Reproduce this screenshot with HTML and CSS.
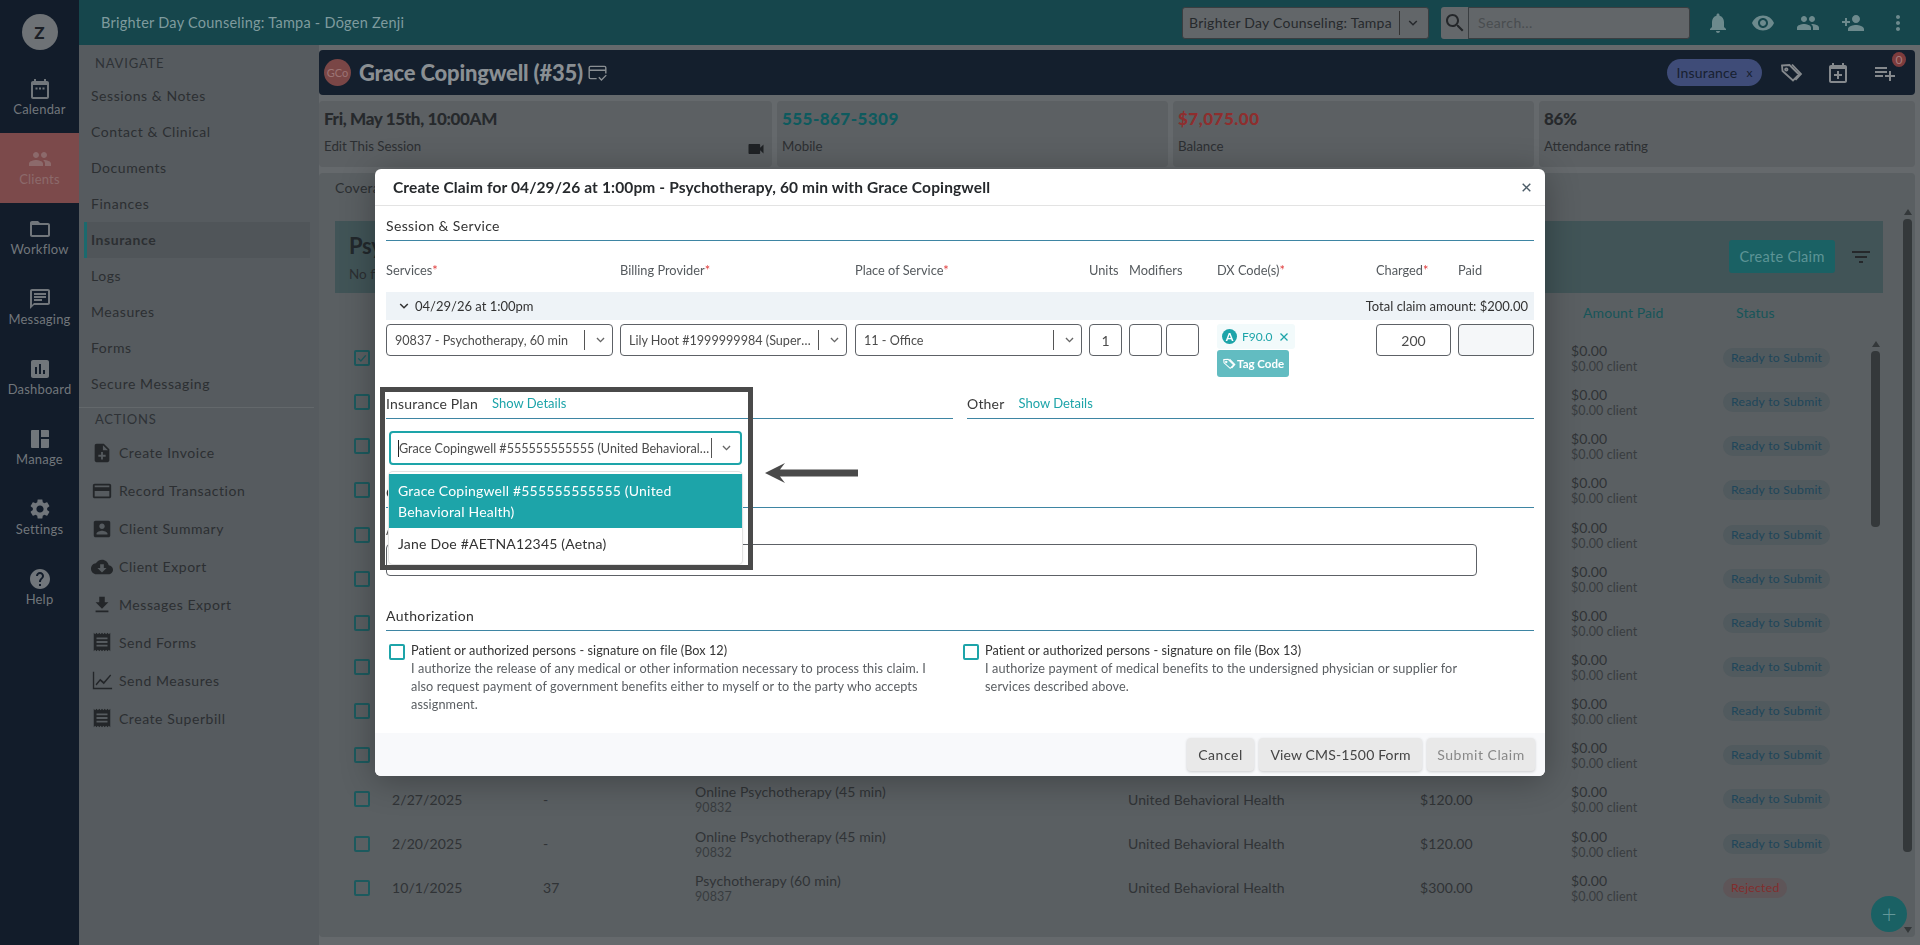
FILE: index.html
```html
<!DOCTYPE html>
<html lang="en">
<head>
<meta charset="utf-8">
<title>Create Claim</title>
<link rel="stylesheet" href="styles.css">
</head>
<body>
<svg class="sprite" aria-hidden="true">
  <symbol id="i-cal" viewBox="0 0 24 24"><path d="M19 4h-1V2h-2v2H8V2H6v2H5c-1.1 0-2 .9-2 2v14c0 1.1.9 2 2 2h14c1.1 0 2-.9 2-2V6c0-1.1-.9-2-2-2zm0 16H5V8h14v12zM7.500 10.500h2v2h-2zM11 10.500h2v2h-2zM14.500 10.500h2v2h-2z"/></symbol>
  <symbol id="i-people" viewBox="0 0 24 24"><path d="M16 11c1.660 0 2.990-1.340 2.990-3S17.660 5 16 5c-1.660 0-3 1.340-3 3s1.340 3 3 3zm-8 0c1.660 0 2.990-1.340 2.990-3S9.660 5 8 5C6.340 5 5 6.340 5 8s1.340 3 3 3zm0 2c-2.330 0-7 1.170-7 3.500V19h14v-2.500c0-2.330-4.670-3.500-7-3.500zm8 0c-.29 0-.62.02-.97.05 1.160.84 1.970 1.970 1.970 3.450V19h6v-2.500c0-2.330-4.670-3.500-7-3.500z"/></symbol>
  <symbol id="i-folder" viewBox="0 0 24 24"><path d="M20 6h-8l-2-2H4c-1.100 0-1.990.9-1.990 2L2 18c0 1.100.9 2 2 2h16c1.100 0 2-.9 2-2V8c0-1.100-.9-2-2-2zm0 12H4V8h16v10z"/></symbol>
  <symbol id="i-msg" viewBox="0 0 24 24"><path d="M20 2H4c-1.100 0-2 .9-2 2v18l4-4h14c1.100 0 2-.9 2-2V4c0-1.100-.9-2-2-2zm0 14H6l-2 2V4h16v12zM6 12h8v2H6zM6 9h12v2H6zM6 6h12v2H6z"/></symbol>
  <symbol id="i-chart" viewBox="0 0 24 24"><path d="M19 3H5c-1.100 0-2 .9-2 2v14c0 1.100.9 2 2 2h14c1.100 0 2-.9 2-2V5c0-1.100-.9-2-2-2zM9 17H7v-7h2v7zm4 0h-2V7h2v10zm4 0h-2v-4h2v4z"/></symbol>
  <symbol id="i-dash" viewBox="0 0 24 24"><path d="M4 3h7v18H4a1 1 0 0 1-1-1V4a1 1 0 0 1 1-1zM13 3h7a1 1 0 0 1 1 1v6h-8zM13 12h8v8a1 1 0 0 1-1 1h-7z"/></symbol>
  <symbol id="i-gear" viewBox="0 0 24 24"><path d="M19.140 12.940c.04-.3.06-.61.06-.94 0-.32-.02-.64-.07-.94l2.030-1.580c.18-.14.23-.41.12-.61l-1.920-3.320c-.12-.22-.37-.29-.59-.22l-2.390.96c-.5-.38-1.030-.7-1.620-.94l-.36-2.540c-.04-.24-.24-.41-.48-.41h-3.840c-.24 0-.43.17-.47.41l-.36 2.540c-.59.24-1.130.57-1.620.94l-2.390-.96c-.22-.08-.47 0-.59.22L2.740 8.870c-.12.21-.08.47.12.61l2.030 1.580c-.05.3-.09.63-.09.94s.02.64.07.94l-2.030 1.580c-.18.14-.23.41-.12.61l1.920 3.320c.12.22.37.29.59.22l2.390-.96c.5.38 1.030.7 1.620.94l.36 2.540c.05.24.24.41.48.41h3.840c.24 0 .44-.17.47-.41l.36-2.540c.59-.24 1.130-.56 1.620-.94l2.390.96c.22.08.47 0 .59-.22l1.920-3.320c.12-.22.07-.47-.12-.61l-2.010-1.580zM12 15.600c-1.980 0-3.600-1.620-3.600-3.600s1.620-3.600 3.600-3.600 3.600 1.620 3.600 3.600-1.620 3.600-3.600 3.600z"/></symbol>
  <symbol id="i-help" viewBox="0 0 24 24"><path d="M12 2C6.480 2 2 6.480 2 12s4.480 10 10 10 10-4.480 10-10S17.520 2 12 2zm1 17h-2v-2h2v2zm2.070-7.750l-.9.92C13.450 12.900 13 13.500 13 15h-2v-.5c0-1.100.45-2.100 1.170-2.830l1.240-1.260c.37-.36.59-.86.59-1.410 0-1.100-.9-2-2-2s-2 .9-2 2H8c0-2.210 1.790-4 4-4s4 1.790 4 4c0 .88-.36 1.680-.93 2.250z"/></symbol>
  <symbol id="i-note" viewBox="0 0 24 24"><path d="M14 2H6c-1.100 0-1.990.9-1.990 2L4 20c0 1.100.89 2 1.990 2H18c1.100 0 2-.9 2-2V8l-6-6zm2 14h-3v3h-2v-3H8v-2h3v-3h2v3h3v2zm-3-7V3.500L18.500 9H13z"/></symbol>
  <symbol id="i-card" viewBox="0 0 24 24"><path d="M20 4H4c-1.110 0-1.990.89-1.990 2L2 18c0 1.110.89 2 2 2h16c1.110 0 2-.89 2-2V6c0-1.110-.89-2-2-2zm0 14H4v-6h16v6zm0-10H4V6h16v2z"/></symbol>
  <symbol id="i-acct" viewBox="0 0 24 24"><path d="M3 5v14c0 1.100.89 2 2 2h14c1.100 0 2-.9 2-2V5c0-1.100-.9-2-2-2H5c-1.110 0-2 .9-2 2zm12 4c0 1.660-1.340 3-3 3s-3-1.340-3-3 1.340-3 3-3 3 1.340 3 3zm-9 8c0-2 4-3.100 6-3.100s6 1.100 6 3.100v1H6v-1z"/></symbol>
  <symbol id="i-cloud" viewBox="0 0 24 24"><path d="M19.350 10.040C18.670 6.590 15.640 4 12 4 9.110 4 6.600 5.640 5.350 8.040 2.340 8.360 0 10.910 0 14c0 3.310 2.690 6 6 6h13c2.760 0 5-2.240 5-5 0-2.640-2.050-4.780-4.650-4.960zM17 13l-5 5-5-5h3V9h4v4h3z"/></symbol>
  <symbol id="i-down" viewBox="0 0 24 24"><path d="M19 9h-4V3H9v6H5l7 7 7-7zM5 18v2h14v-2H5z"/></symbol>
  <symbol id="i-receipt" viewBox="0 0 24 24"><path d="M3 22l1.500-1.500L6 22l1.500-1.500L9 22l1.500-1.500L12 22l1.500-1.500L15 22l1.500-1.500L18 22l1.500-1.500L21 22V2l-1.500 1.500L18 2l-1.500 1.500L15 2l-1.500 1.500L12 2l-1.500 1.500L9 2 7.500 3.500 6 2 4.500 3.500 3 2v20zM18 17H6v-2h12v2zm0-4H6v-2h12v2zm0-4H6V7h12v2z"/></symbol>
  <symbol id="i-line" viewBox="0 0 24 24"><path d="M2 3h1.500v17.500H23V22H2zM5 16.500l5-6 4 3.500 7-8 1 1-8 9.500-4-3.500-4 5z"/></symbol>
  <symbol id="i-bell" viewBox="0 0 24 24"><path d="M12 22c1.100 0 2-.9 2-2h-4c0 1.100.89 2 2 2zm6-6v-5c0-3.070-1.640-5.640-4.500-6.320V4c0-.83-.67-1.500-1.500-1.500s-1.500.67-1.500 1.500v.68C7.630 5.360 6 7.920 6 11v5l-2 2v1h16v-1l-2-2z"/></symbol>
  <symbol id="i-eye" viewBox="0 0 24 24"><path d="M12 4.500C7 4.500 2.730 7.610 1 12c1.730 4.390 6 7.500 11 7.500s9.270-3.110 11-7.500c-1.730-4.390-6-7.500-11-7.500zM12 17c-2.760 0-5-2.240-5-5s2.240-5 5-5 5 2.240 5 5-2.240 5-5 5zm0-8c-1.660 0-3 1.340-3 3s1.340 3 3 3 3-1.340 3-3-1.340-3-3-3z"/></symbol>
  <symbol id="i-padd" viewBox="0 0 24 24"><path d="M15 12c2.210 0 4-1.790 4-4s-1.790-4-4-4-4 1.790-4 4 1.790 4 4 4zm-9-2V7H4v3H1v2h3v3h2v-3h3v-2H6zm9 4c-2.670 0-8 1.340-8 4v2h16v-2c0-2.660-5.330-4-8-4z"/></symbol>
  <symbol id="i-more" viewBox="0 0 24 24"><path d="M12 8c1.100 0 2-.9 2-2s-.9-2-2-2-2 .9-2 2 .9 2 2 2zm0 2c-1.100 0-2 .9-2 2s.9 2 2 2 2-.9 2-2-.9-2-2-2zm0 6c-1.100 0-2 .9-2 2s.9 2 2 2 2-.9 2-2-.9-2-2-2z"/></symbol>
  <symbol id="i-search" viewBox="0 0 24 24"><path d="M15.500 14h-.79l-.28-.27C15.410 12.590 16 11.110 16 9.500 16 5.910 13.090 3 9.500 3S3 5.910 3 9.500 5.910 16 9.500 16c1.610 0 3.090-.59 4.230-1.570l.27.28v.79l5 4.990L20.490 19l-4.990-5zm-6 0C7.010 14 5 11.990 5 9.500S7.010 5 9.500 5 14 7.010 14 9.500 11.990 14 9.500 14z"/></symbol>
  <symbol id="i-tag" viewBox="0 0 24 24"><path d="M3 4.500 10.500 4 20 13.500l-6 6L3.500 10zM7.300 7.300a1.200 1.200 0 1 0 .01 0zM13 3.500l9 9.500-5.500 6" fill="none" stroke="currentColor" stroke-width="1.800"/></symbol>
  <symbol id="i-calplus" viewBox="0 0 24 24"><path d="M19 4h-1V2h-2v2H8V2H6v2H5c-1.100 0-2 .9-2 2v14c0 1.100.9 2 2 2h14c1.100 0 2-.9 2-2V6c0-1.100-.9-2-2-2zm0 16H5V8h14v12zm-8-10h2v3h3v2h-3v3h-2v-3H8v-2h3z"/></symbol>
  <symbol id="i-plist" viewBox="0 0 24 24"><path d="M14 10H2v2h12v-2zm0-4H2v2h12V6zm4 8v-4h-2v4h-4v2h4v4h2v-4h4v-2h-4zM2 16h8v-2H2v2z"/></symbol>
  <symbol id="i-video" viewBox="0 0 24 24"><path d="M17 10.500V7c0-.55-.45-1-1-1H4c-.55 0-1 .45-1 1v10c0 .55.45 1 1 1h12c.55 0 1-.45 1-1v-3.500l4 4v-11l-4 4z"/></symbol>
  <symbol id="i-filter" viewBox="0 0 24 24"><path d="M10 18h4v-2h-4v2zM3 6v2h18V6H3zm3 7h12v-2H6v2z"/></symbol>
  <symbol id="i-chev" viewBox="0 0 24 24"><path d="M5.500 8.500 12 15l6.500-6.500" fill="none" stroke="currentColor" stroke-width="2.600"/></symbol>
  <symbol id="i-x" viewBox="0 0 24 24"><path d="M5 5l14 14M19 5 5 19" fill="none" stroke="currentColor" stroke-width="2.600"/></symbol>
  <symbol id="i-cardcheck" viewBox="0 0 24 24"><path d="M11 19H4a1.500 1.500 0 0 1-1.500-1.500v-11A1.500 1.500 0 0 1 4 5h16a1.500 1.500 0 0 1 1.500 1.500V13M2.500 9.500h19M13.500 17.500l3 3 5.500-5.500" fill="none" stroke="currentColor" stroke-width="1.600"/></symbol>
</svg>

<div class="app">
  <nav class="rail">
    <div class="rail-top"><span class="rail-avatar">Z</span></div>
    <a class="rail-item"><svg class="ic24"><use href="#i-cal"/></svg>Calendar</a>
    <a class="rail-item is-current"><svg class="ic24"><use href="#i-people"/></svg>Clients</a>
    <a class="rail-item"><svg class="ic24"><use href="#i-folder"/></svg>Workflow</a>
    <a class="rail-item"><svg class="ic24"><use href="#i-msg"/></svg>Messaging</a>
    <a class="rail-item"><svg class="ic24"><use href="#i-chart"/></svg>Dashboard</a>
    <a class="rail-item"><svg class="ic24"><use href="#i-dash"/></svg>Manage</a>
    <a class="rail-item"><svg class="ic24"><use href="#i-gear"/></svg>Settings</a>
    <a class="rail-item"><svg class="ic24"><use href="#i-help"/></svg>Help</a>
  </nav>

  <div class="shell">
    <header class="topbar">
      <div class="brand">Brighter Day Counseling: Tampa - Dōgen Zenji</div>
      <div class="top-select"><span>Brighter Day Counseling: Tampa</span><i class="sep"></i><svg class="ic14"><use href="#i-chev"/></svg></div>
      <div class="top-search">
        <span class="search-btn"><svg class="ic24"><use href="#i-search"/></svg></span>
        <span class="search-input">Search...</span>
      </div>
      <div class="top-icons">
        <svg class="ic24"><use href="#i-bell"/></svg>
        <svg class="ic24"><use href="#i-eye"/></svg>
        <svg class="ic24"><use href="#i-people"/></svg>
        <svg class="ic24"><use href="#i-padd"/></svg>
        <svg class="ic24"><use href="#i-more"/></svg>
      </div>
    </header>

    <div class="under">
      <aside class="sidenav">
        <div class="nav-heading nav-heading-first">NAVIGATE</div>
        <a class="nav-item">Sessions &amp; Notes</a>
        <a class="nav-item">Contact &amp; Clinical</a>
        <a class="nav-item">Documents</a>
        <a class="nav-item">Finances</a>
        <a class="nav-item is-active">Insurance</a>
        <a class="nav-item">Logs</a>
        <a class="nav-item">Measures</a>
        <a class="nav-item">Forms</a>
        <a class="nav-item">Secure Messaging</a>
        <div class="nav-divider"></div>
        <div class="nav-heading">ACTIONS</div>
        <a class="act-item"><svg class="ic24"><use href="#i-note"/></svg>Create Invoice</a>
        <a class="act-item"><svg class="ic24"><use href="#i-card"/></svg>Record Transaction</a>
        <a class="act-item"><svg class="ic24"><use href="#i-acct"/></svg>Client Summary</a>
        <a class="act-item"><svg class="ic24"><use href="#i-cloud"/></svg>Client Export</a>
        <a class="act-item"><svg class="ic24"><use href="#i-down"/></svg>Messages Export</a>
        <a class="act-item"><svg class="ic24"><use href="#i-receipt"/></svg>Send Forms</a>
        <a class="act-item"><svg class="ic24"><use href="#i-line"/></svg>Send Measures</a>
        <a class="act-item"><svg class="ic24"><use href="#i-receipt"/></svg>Create Superbill</a>
      </aside>

      <main class="content">
        <section class="client-bar">
          <span class="client-avatar">GCo</span>
          <h1 class="client-name">Grace Copingwell (#35)</h1>
          <svg class="client-card"><use href="#i-cardcheck"/></svg>
          <span class="client-spacer"></span>
          <span class="client-pill">Insurance<span class="pill-x">x</span></span>
          <svg class="ic24 bar-icon"><use href="#i-tag"/></svg>
          <svg class="ic24 bar-icon"><use href="#i-calplus"/></svg>
          <span class="bar-badged">
            <svg class="ic24 bar-icon"><use href="#i-plist"/></svg>
            <span class="bar-badge">0</span>
          </span>
        </section>

        <section class="stats">
          <div class="stat stat-a">
            <div class="stat-big">Fri, May 15th, 10:00AM</div>
            <div class="stat-small">Edit This Session</div>
            <svg class="ic20 stat-video"><use href="#i-video"/></svg>
          </div>
          <div class="stat stat-b">
            <div class="stat-big tone-teal">555-867-5309</div>
            <div class="stat-small">Mobile</div>
          </div>
          <div class="stat stat-c">
            <div class="stat-big tone-red">$7,075.00</div>
            <div class="stat-small">Balance</div>
          </div>
          <div class="stat stat-d">
            <div class="stat-big">86%</div>
            <div class="stat-small">Attendance rating</div>
          </div>
        </section>

        <section class="panel">
          <div class="tabs"><span>Coverage</span></div>
          <div class="banner">
            <div>
              <div class="banner-title">Psychotherapy Claims</div>
              <div class="banner-sub">No filters applied</div>
            </div>
            <div class="banner-actions">
              <span class="claim-btn">Create Claim</span>
              <svg class="ic24"><use href="#i-filter"/></svg>
            </div>
          </div>

          <div class="tbl">
            <div class="tbl-row tbl-head"><span></span><span>Date</span><span>Claim</span><span>Service</span><span>Insurance</span><span>Amount</span><span class="hd-paid">Amount Paid</span><span class="hd-status">Status</span></div>
            <div class="tbl-row"><span class="cb is-checked"><svg viewBox="0 0 16 16"><path d="M3 8.500 6.500 12 13 4.500" fill="none" stroke="currentColor" stroke-width="1.800"/></svg></span><span>4/29/2026</span><span>-</span><span>Psychotherapy (60 min)<small>90837</small></span><span>United Behavioral Health</span><span>$200.00</span><span>$0.00<small>$0.00 client</small></span><span><em class="status">Ready to Submit</em></span></div>
            <div class="tbl-row"><span class="cb"></span><span>4/22/2026</span><span>-</span><span>Psychotherapy (60 min)<small>90837</small></span><span>United Behavioral Health</span><span>$200.00</span><span>$0.00<small>$0.00 client</small></span><span><em class="status">Ready to Submit</em></span></div>
            <div class="tbl-row"><span class="cb"></span><span>4/15/2026</span><span>-</span><span>Psychotherapy (60 min)<small>90837</small></span><span>United Behavioral Health</span><span>$200.00</span><span>$0.00<small>$0.00 client</small></span><span><em class="status">Ready to Submit</em></span></div>
            <div class="tbl-row"><span class="cb"></span><span>4/8/2026</span><span>-</span><span>Psychotherapy (60 min)<small>90837</small></span><span>United Behavioral Health</span><span>$200.00</span><span>$0.00<small>$0.00 client</small></span><span><em class="status">Ready to Submit</em></span></div>
            <div class="tbl-row"><span class="cb"></span><span>4/1/2026</span><span>-</span><span>Psychotherapy (60 min)<small>90837</small></span><span>United Behavioral Health</span><span>$200.00</span><span>$0.00<small>$0.00 client</small></span><span><em class="status">Ready to Submit</em></span></div>
            <div class="tbl-row"><span class="cb"></span><span>3/25/2026</span><span>-</span><span>Psychotherapy (60 min)<small>90837</small></span><span>United Behavioral Health</span><span>$200.00</span><span>$0.00<small>$0.00 client</small></span><span><em class="status">Ready to Submit</em></span></div>
            <div class="tbl-row"><span class="cb"></span><span>3/18/2026</span><span>-</span><span>Psychotherapy (60 min)<small>90837</small></span><span>United Behavioral Health</span><span>$200.00</span><span>$0.00<small>$0.00 client</small></span><span><em class="status">Ready to Submit</em></span></div>
            <div class="tbl-row"><span class="cb"></span><span>3/11/2026</span><span>-</span><span>Psychotherapy (60 min)<small>90837</small></span><span>United Behavioral Health</span><span>$200.00</span><span>$0.00<small>$0.00 client</small></span><span><em class="status">Ready to Submit</em></span></div>
            <div class="tbl-row"><span class="cb"></span><span>3/6/2025</span><span>-</span><span>Online Psychotherapy (45 min)<small>90832</small></span><span>United Behavioral Health</span><span>$120.00</span><span>$0.00<small>$0.00 client</small></span><span><em class="status">Ready to Submit</em></span></div>
            <div class="tbl-row"><span class="cb"></span><span>3/3/2025</span><span>-</span><span>Online Psychotherapy (45 min)<small>90832</small></span><span>United Behavioral Health</span><span>$120.00</span><span>$0.00<small>$0.00 client</small></span><span><em class="status">Ready to Submit</em></span></div>
            <div class="tbl-row"><span class="cb"></span><span>2/27/2025</span><span>-</span><span>Online Psychotherapy (45 min)<small>90832</small></span><span>United Behavioral Health</span><span>$120.00</span><span>$0.00<small>$0.00 client</small></span><span><em class="status">Ready to Submit</em></span></div>
            <div class="tbl-row"><span class="cb"></span><span>2/20/2025</span><span>-</span><span>Online Psychotherapy (45 min)<small>90832</small></span><span>United Behavioral Health</span><span>$120.00</span><span>$0.00<small>$0.00 client</small></span><span><em class="status">Ready to Submit</em></span></div>
            <div class="tbl-row"><span class="cb"></span><span>10/1/2025</span><span>37</span><span>Psychotherapy (60 min)<small>90837</small></span><span>United Behavioral Health</span><span>$300.00</span><span>$0.00<small>$0.00 client</small></span><span><em class="status status-bad">Rejected</em></span></div>
          </div>

          <div class="sb sb-inner"><i class="sb-up"></i><i class="sb-thumb"></i></div>
          <div class="sb sb-outer"><i class="sb-up"></i><i class="sb-thumb"></i><i class="sb-down"></i></div>
          <span class="fab">+</span>
        </section>
      </main>
    </div>
  </div>
</div>

<div class="modal" role="dialog">
  <header class="modal-head">
    <h2>Create Claim for 04/29/26 at 1:00pm - Psychotherapy, 60 min with Grace Copingwell</h2>
    <svg class="modal-x"><use href="#i-x"/></svg>
  </header>

  <div class="modal-body">
    <div class="sec-head">Session &amp; Service</div>

    <div class="svc-grid svc-labels">
      <span>Services<b>*</b></span>
      <span>Billing Provider<b>*</b></span>
      <span>Place of Service<b>*</b></span>
      <span>Units</span>
      <span class="span2">Modifiers</span>
      <span>DX Code(s)<b>*</b></span>
      <span>Charged<b>*</b></span>
      <span>Paid</span>
    </div>

    <div class="date-bar">
      <span class="date-left"><svg class="ic14"><use href="#i-chev"/></svg>04/29/26 at 1:00pm</span>
      <span>Total claim amount: $200.00</span>
    </div>

    <div class="svc-grid svc-row">
      <div class="sel sel-svc"><span class="sel-val">90837 - Psychotherapy, 60 min</span><i class="sep"></i><svg class="ic14"><use href="#i-chev"/></svg></div>
      <div class="sel sel-svc"><span class="sel-val">Lily Hoot #1999999984 (Supervising)</span><i class="sep"></i><svg class="ic14"><use href="#i-chev"/></svg></div>
      <div class="sel sel-svc"><span class="sel-val">11 - Office</span><i class="sep"></i><svg class="ic14"><use href="#i-chev"/></svg></div>
      <div class="box box-units">1</div>
      <div class="box box-mod"></div>
      <div class="box box-mod"></div>
      <div class="dx">
        <span class="dx-chip"><i class="dx-a">A</i>F90.0<svg class="dx-x"><use href="#i-x"/></svg></span>
        <span class="dx-tag"><svg class="ic14"><use href="#i-tag"/></svg>Tag Code</span>
      </div>
      <div class="box box-money">200</div>
      <div class="box box-money is-off"></div>
    </div>

    <div class="two-col">
      <div>
        <div class="sec-head sec-flush">Insurance Plan<a class="show">Show Details</a></div>
        <div class="plan-wrap">
          <div class="sel plan-sel"><i class="caret"></i><span class="sel-val">Grace Copingwell #555555555555 (United Behavioral Health)</span><i class="sep"></i><svg class="ic14"><use href="#i-chev"/></svg></div>
          <ul class="menu">
            <li class="menu-on">Grace Copingwell #555555555555 (United Behavioral Health)</li>
            <li>Jane Doe #AETNA12345 (Aetna)</li>
          </ul>
        </div>
      </div>
      <div>
        <div class="sec-head sec-flush">Other<a class="show">Show Details</a></div>
      </div>
    </div>

    <div class="sec-head sec-comment">Comments</div>
    <div class="field-label">Additional claim information</div>
    <div class="note-input">Add a comment to this claim</div>

    <div class="sec-head sec-auth">Authorization</div>
    <div class="auth">
      <div class="auth-item">
        <span class="cb cb-bright"></span>
        <p><strong>Patient or authorized persons - signature on file (Box 12)</strong>I authorize the release of any medical or other information necessary to process this claim. I also request payment of government benefits either to myself or to the party who accepts assignment.</p>
      </div>
      <div class="auth-item">
        <span class="cb cb-bright"></span>
        <p><strong>Patient or authorized persons - signature on file (Box 13)</strong>I authorize payment of medical benefits to the undersigned physician or supplier for services described above.</p>
      </div>
    </div>
  </div>

  <footer class="modal-foot">
    <button class="btn btn-cancel">Cancel</button>
    <button class="btn btn-view">View CMS-1500 Form</button>
    <button class="btn btn-off">Submit Claim</button>
  </footer>

  <div class="note-frame"></div>
  <svg class="note-arrow" viewBox="0 0 93 20"><path d="M0 10 20 0l-5 6.500h78v7H15l5 6.500z"/></svg>
</div>
</body>
</html>
```

FILE: styles.css
```css
* { box-sizing: border-box; }
html, body { margin: 0; height: 945px; overflow: hidden; }
body { font-family: Lato, "Open Sans", sans-serif; font-size: 14px; color: #2c2f32; background: #65696c; }
h1, h2, p, ul { margin: 0; padding: 0; }
.sprite { display: none; }
svg { fill: currentColor; flex: none; }
.ic24 { width: 24px; height: 24px; }
.ic20 { width: 20px; height: 20px; }
.ic14 { width: 14px; height: 14px; }

.app { display: flex; height: 945px; }

/* left rail */
.rail { width: 79px; flex: none; background: #121c2a; color: #71767b; display: flex; flex-direction: column; }
.rail-top { height: 63px; display: flex; align-items: flex-start; justify-content: center; padding-top: 14px; }
.rail-avatar { width: 36px; height: 36px; border-radius: 50%; background: #6e7276; color: #1c2026; font-weight: 900; font-size: 17px; display: flex; align-items: center; justify-content: center; }
.rail-item { height: 70px; display: flex; flex-direction: column; align-items: center; justify-content: center; gap: 0; font-size: 13px; line-height: 16px; letter-spacing: .2px; padding-bottom: 3px; }
.rail-item.is-current { background: #7c4a4b; color: #8c6a6b; }

/* shell */
.shell { flex: 1; min-width: 0; display: flex; flex-direction: column; }
.topbar { height: 45px; flex: none; background: #16464c; display: flex; align-items: center; padding-left: 22px; }
.brand { flex: 1; color: #7f9b9e; font-size: 14.5px; letter-spacing: .25px; }
.top-select { width: 247px; height: 32px; border: 1px solid #3a3e41; border-radius: 3px; background: #626669; color: #26292c; display: flex; align-items: center; padding: 0 8px 0 6px; font-size: 14px; letter-spacing: .25px; margin-right: 12px; }
.top-select span { flex: 1; white-space: nowrap; }
.top-select .sep { height: 24px; margin-right: 6px; background: #333; }
.sep { width: 1px; flex: none; background: #555; }
.top-search { display: flex; height: 32px; margin-right: 16px; }
.search-btn { width: 27px; background: #64686b; border-radius: 3px 0 0 3px; display: flex; align-items: center; justify-content: center; color: #24272a; }
.search-input { width: 222px; background: #626669; border: 1px solid #3a3e41; border-radius: 0 3px 3px 0; color: #494d50; padding: 6px 9px; letter-spacing: .4px; }
.top-icons { display: flex; gap: 21px; color: #6d8a8d; padding-right: 10px; }

.under { flex: 1; display: flex; min-height: 0; }

/* second nav */
.sidenav { width: 240px; flex: none; background: #565b5f; display: flex; flex-direction: column; }
.nav-heading { padding-left: 16px; height: 26px; line-height: 22px; font-size: 13px; letter-spacing: .8px; color: #2e3236; }
.nav-heading-first { height: 33px; line-height: 36px; }
.nav-item { height: 36px; line-height: 36px; margin: 0 9px 0 5px; border-left: 3px solid transparent; padding-left: 4px; letter-spacing: .55px; color: #2c2f32; }
.nav-item.is-active { background: #505559; border-left-color: #1b6a6e; font-weight: 700; }
.nav-divider { height: 1px; background: #63686b; margin: 5px 5px 0 0; }
.act-item { height: 37.900px; display: flex; align-items: center; gap: 5px; padding-left: 12px; letter-spacing: .55px; color: #2c2f32; }
.act-item .ic24 { width: 22px; height: 22px; color: #232629; margin-right: 1px; }

/* content */
.content { flex: 1; min-width: 0; display: flex; flex-direction: column; gap: 6px; padding: 5px 5px 8px 0; }
.client-bar { height: 45px; flex: none; background: #141f2d; border-radius: 4px; display: flex; align-items: center; padding-left: 5px; color: #8a8f93; }
.client-avatar { width: 27px; height: 27px; border-radius: 50%; background: #7a4646; color: #9c7474; font-size: 11px; display: flex; align-items: center; justify-content: center; margin-right: 8px; }
.client-name { font-size: 22px; font-weight: 900; letter-spacing: -.2px; }
.client-card { margin-left: 4px; width: 21px; height: 21px; }
.client-spacer { flex: 1; }
.client-pill { width: 95px; height: 27px; border-radius: 14px; background: #3f4c78; color: #171f30; display: flex; align-items: center; justify-content: center; gap: 9px; letter-spacing: .2px; margin-right: 17px; }
.pill-x { font-size: 12px; }
.bar-icon { color: #85898d; margin-right: 23px; }
.bar-badged { position: relative; display: flex; }
.bar-badged .bar-icon { margin-right: 18px; }
.bar-badge { position: absolute; right: 9px; top: -9px; width: 14px; height: 15px; border-radius: 50%; background: #7e3c3d; color: #a57d7d; font-size: 12px; line-height: 15px; text-align: center; }

.stats { display: grid; grid-template-columns: 453px 391px 361px 376px; gap: 5px; height: 66px; flex: none; }
.stat { position: relative; background: #5c6063; border-radius: 4px; padding: 7px 5px; }
.stat-big { font-size: 17px; line-height: 22px; font-weight: 900; letter-spacing: -.35px; color: #26292c; }
.stat-small { margin-top: 7px; font-size: 13.300px; color: #2c2f32; line-height: 18px; }
.tone-teal { color: #0e5a5e; letter-spacing: .45px; }
.tone-red { color: #8e2e2e; letter-spacing: .5px; }
.stat-video { position: absolute; right: 6px; bottom: 8px; color: #1f2225; }

.panel { position: relative; flex: 1; min-height: 0; overflow: hidden; background: #5a5f62; border-radius: 4px; padding: 0 32px 0 16px; }
.tabs { height: 48px; padding-top: 6px; line-height: 18px; letter-spacing: .3px; }
.banner { height: 72px; background: #415457; display: flex; align-items: center; justify-content: space-between; padding: 0 10px 0 14px; }
.banner-title { font-size: 22px; font-weight: 700; line-height: 28px; letter-spacing: -.3px; color: #22282c; }
.banner-sub { margin-top: 5px; line-height: 18px; font-size: 13.500px; }
.banner-actions { display: flex; align-items: center; gap: 14px; color: #25282b; }
.claim-btn { width: 106px; height: 33px; margin-top: -2px; border-radius: 3px; background: #1a6164; color: #5d9496; display: flex; align-items: center; justify-content: center; font-size: 14.500px; letter-spacing: .3px; }

.tbl { display: flex; flex-direction: column; }
.tbl-row { display: grid; grid-template-columns: 38px 151px 152px 433px 292px 151px 152px 1fr; align-items: center; height: 44.150px; padding-left: 19px; line-height: 17px; letter-spacing: .1px; color: #303336; }
.tbl-head { height: 43px; color: #175559; padding-bottom: 4px; }
.tbl-row small { display: block; font-size: 12.500px; line-height: 15px; color: #383c3f; }
.hd-paid { padding-left: 12px; }
.hd-status { padding-left: 13px; }
.cb { width: 16px; height: 16px; border: 2px solid #1c5a5e; border-radius: 2px; display: block; color: #1c5a5e; }
.cb svg { display: block; width: 12px; height: 12px; }
.status { display: inline-block; height: 20px; line-height: 20px; padding: 0 8px; border-radius: 10px; background: #515a5e; color: #20465a; font-style: normal; font-size: 12.200px; letter-spacing: .25px; }
.status-bad { background: #5e5558; color: #822d2d; }

.sb { position: absolute; width: 9px; display: flex; flex-direction: column; align-items: center; }
.sb-inner { left: 1552px; top: 168px; }
.sb-outer { left: 1584px; top: 36px; bottom: 0; }
.sb-up { width: 0; height: 0; border: 4.500px solid transparent; border-top: 0; border-bottom: 6px solid #34383a; margin-bottom: 4px; }
.sb-down { width: 0; height: 0; margin-top: auto; margin-bottom: 4px; border: 4.500px solid transparent; border-bottom: 0; border-top: 6px solid #34383a; }
.sb-thumb { width: 9px; background: #34383a; border-radius: 4px; }
.sb-inner .sb-thumb { height: 176px; }
.sb-outer .sb-thumb { height: 633px; }
.fab { position: absolute; left: 1552px; top: 723px; width: 36px; height: 36px; border-radius: 50%; background: #1a6164; color: #64989a; font-size: 26px; line-height: 34px; text-align: center; font-weight: 300; }

/* modal */
.modal { position: fixed; left: 375px; top: 169px; width: 1170px; height: 607px; background: #fff; border-radius: 6px; display: flex; flex-direction: column; box-shadow: 0 4px 34px rgba(0,0,0,.3); color: #333; }
.modal-head { height: 37px; flex: none; border-bottom: 1px solid #e3e3e3; display: flex; align-items: center; justify-content: space-between; padding: 0 12px 0 18px; color: #4c5c68; }
.modal-head h2 { font-size: 15.500px; font-weight: 700; letter-spacing: .13px; color: #26292c; }
.modal-x { width: 13px; height: 13px; }
.modal-body { padding: 9px 11px 0; flex: 1; }
.sec-head { height: 26px; line-height: 22px; border-bottom: 1px solid #3e85a3; letter-spacing: .35px; color: #333; }
.sec-flush { letter-spacing: .2px; color: #3a3a3a; }
.show { margin-left: 14px; font-size: 13px; color: #1da4a9; letter-spacing: 0; position: relative; top: -1px; }

.svc-grid { display: grid; grid-template-columns: 234px 235px 234px 40px 37px 51px 159px 82px 76px; }
.svc-labels { margin-top: 21px; font-size: 12.800px; line-height: 16px; color: #555a5e; }
.svc-labels b { color: #e03a3a; font-weight: 400; }
.span2 { grid-column: span 2; }
.date-bar { margin-top: 14px; height: 28px; background: #eef3f7; display: flex; align-items: center; justify-content: space-between; padding: 0 6px 0 11px; font-size: 13px; color: #333; }
.date-left { display: flex; align-items: center; gap: 4px; }
.svc-row { margin-top: 4px; height: 53px; font-size: 12.600px; }
.sel { display: flex; align-items: center; border: 1px solid #5d6166; border-radius: 4px; color: #4c4c4c; padding: 0 5px 0 8px; height: 32px; }
.sel-svc { width: 227px; }
.sel .sep { height: 20px; margin: 0 9px 0 3px; }
.sel .ic14 { color: #666; width: 13px; }
.sel-val { flex: 1; min-width: 0; overflow: hidden; white-space: nowrap; text-overflow: ellipsis; }
.box { height: 32px; border: 1px solid #5d6166; border-radius: 4px; display: flex; align-items: center; justify-content: center; color: #4c4c4c; font-size: 14px; }
.box-units { width: 33px; }
.box-mod { width: 33px; }
.box-money { width: 75px; }
.box-money.is-off { width: 76px; background: #f5f7f9; }
.dx { display: flex; flex-direction: column; align-items: flex-start; gap: 1px; }
.dx-chip { width: 78px; height: 25px; border-radius: 3px; background: #f2fafb; color: #1da4a9; font-size: 12px; display: flex; align-items: center; padding-left: 5px; }
.dx-a { width: 15px; height: 15px; border-radius: 50%; background: #1da4a9; color: #fff; font-style: normal; font-weight: 700; font-size: 11px; line-height: 15px; text-align: center; margin-right: 5px; }
.dx-x { margin-left: 5px; width: 12px; height: 12px; }
.dx-tag { width: 72px; height: 27px; border-radius: 3px; background: #62bcc1; color: #fff; font-size: 11.500px; font-weight: 700; display: flex; align-items: center; padding-left: 5px; gap: 1px; }

.two-col { margin-top: 16px; display: grid; grid-template-columns: 567px 567px; gap: 14px; }
.plan-wrap { position: relative; margin: 12px 0 0 3px; width: 353px; }
.plan-sel { height: 34px; border: 2px solid #1da4a9; padding: 0 7px; color: #4c4c4c; font-size: 12.600px; z-index: 1; }
.plan-sel .sep { margin: 0 8px 0 0; }
.caret { width: 1px; height: 17px; background: #222; flex: none; }
.menu { position: absolute; left: 0; top: 41px; width: 353px; height: 92px; list-style: none; background: #fff; border-radius: 4px; padding: 2px 0; box-shadow: 0 0 0 1px #e2e2e2, 0 2px 4px rgba(0,0,0,.1); font-size: 14px; line-height: 21px; z-index: 2; letter-spacing: .2px; }
.menu li { padding: 5px 9px 6px 9px; color: #333; }
.menu .menu-on { background: #1da4a9; color: #fff; padding: 6px 40px 6px 9px; }

.sec-comment { margin-top: 17px; }
.field-label { margin-top: 14px; line-height: 16px; font-size: 13px; color: #555; }
.note-input { margin-top: 6px; width: 1091px; height: 32px; border: 1px solid #5d6166; border-radius: 4px; padding: 6px 9px; line-height: 20px; color: #666; }
.sec-auth { margin-top: 29px; }
.auth { display: grid; grid-template-columns: 574px 1fr; margin-top: 10px; }
.auth-item { display: flex; gap: 6px; padding-left: 3px; }
.auth-item p { font-size: 12.700px; line-height: 18px; color: #5a5e62; width: 520px; letter-spacing: .1px; }
.auth-item strong { display: block; font-weight: 400; color: #333; letter-spacing: .05px; }
.auth-item + .auth-item p { width: 480px; }
.cb-bright { flex: none; margin-top: 3px; border-color: #1da4a9; }

.modal-foot { height: 43px; flex: none; background: #f8f9fb; border-radius: 0 0 6px 6px; display: flex; justify-content: flex-end; align-items: center; gap: 5px; padding-right: 10px; }
.btn { height: 33px; border: 0; border-radius: 4px; background: #e9e9e9; box-shadow: 0 1px 3px rgba(0,0,0,.18); font: inherit; font-size: 14px; letter-spacing: .55px; color: #444; padding: 0; }
.btn-cancel { width: 67px; }
.btn-view { width: 163px; letter-spacing: .15px; }
.btn-off { width: 108px; color: #888; }

.note-frame { position: absolute; left: 5px; top: 218px; width: 373px; height: 183px; border: 5px solid #4a4a4a; pointer-events: none; z-index: 3; }
.note-arrow { position: absolute; left: 390px; top: 294px; width: 93px; height: 20px; fill: #4a4a4a; }
```
